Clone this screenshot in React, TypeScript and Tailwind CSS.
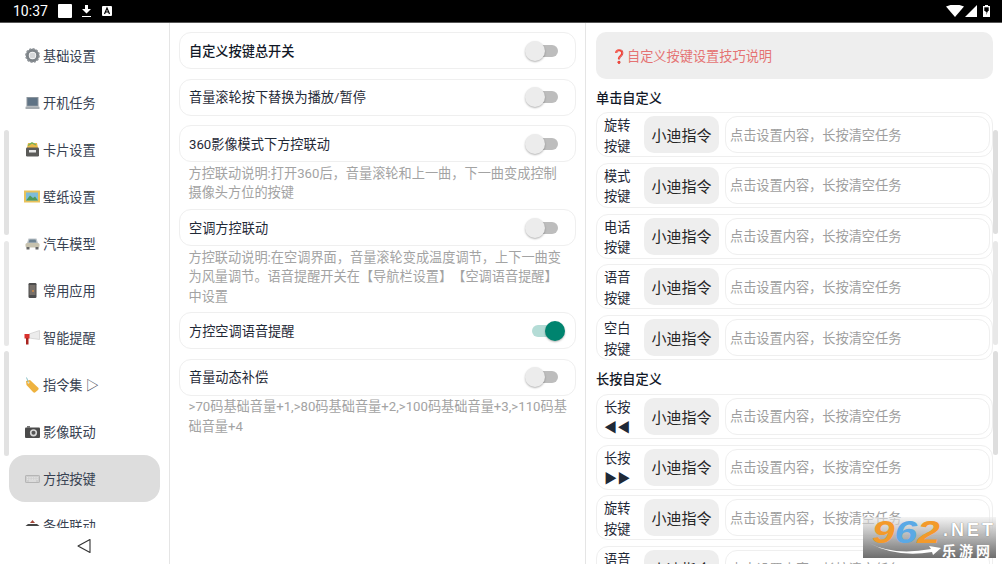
const font = { fontFamily: 'Roboto, "Noto Sans CJK SC", sans-serif' };

const Gear = () => (
  <svg width="15" height="15" viewBox="0 0 15 15">
    <circle cx="7.5" cy="7.5" r="5.2" fill="none" stroke="#7d8388" strokeWidth="3" />
    <circle cx="7.5" cy="7.5" r="6.6" fill="none" stroke="#8f9499" strokeWidth="1.6" strokeDasharray="2 1.45" />
    <circle cx="7.5" cy="7.5" r="3" fill="#d5d7d9" />
  </svg>
);
const Laptop = () => (
  <svg width="15" height="14" viewBox="0 0 15 14">
    <rect x="2" y="1.5" width="11" height="8.5" fill="#5f7385" stroke="#8b949c" />
    <rect x="0.5" y="10.5" width="14" height="2.5" rx="0.6" fill="#a5abb0" />
  </svg>
);
const CardBox = () => (
  <svg width="15" height="15" viewBox="0 0 15 15">
    <path d="M2 6 L3 1 H12 L13 6Z" fill="#e9b949" />
    <path d="M3 3.5 L7 0.8 L11 3" stroke="#79b05b" strokeWidth="1.4" fill="none" />
    <rect x="1" y="5.5" width="13" height="9" rx="1.2" fill="#5a5a58" />
    <rect x="4" y="8" width="7" height="2.5" fill="#e8e8e8" />
  </svg>
);
const Picture = () => (
  <svg width="16" height="13" viewBox="0 0 16 13">
    <rect x="0" y="0.5" width="16" height="12" fill="#e9c25a" />
    <rect x="2" y="2.5" width="12" height="8" fill="#7dbcd9" />
    <path d="M2 10.5 L6 5.5 L9 8 L11 6.5 L14 10.5Z" fill="#4e9a5a" />
  </svg>
);
const Car = () => (
  <svg width="15" height="13" viewBox="0 0 15 13">
    <path d="M3.5 1.5 H11.5 L13 6 H2Z" fill="#bfc5c9" />
    <path d="M4.5 2.5 H10.5 L11.5 5.5 H3.5Z" fill="#6f8492" />
    <rect x="0.5" y="6" width="14" height="4.5" rx="1.5" fill="#c7c2ae" />
    <rect x="1.5" y="10" width="3" height="2.5" fill="#666" />
    <rect x="10.5" y="10" width="3" height="2.5" fill="#666" />
  </svg>
);
const Phone = () => (
  <svg width="9" height="15" viewBox="0 0 9 15">
    <rect x="0.5" y="0" width="8" height="15" rx="1.2" fill="#4d4d4d" />
    <rect x="1.5" y="2" width="6" height="10" fill="#77706a" />
    <circle cx="5" cy="8" r="1" fill="#d08a45" />
  </svg>
);
const Megaphone = () => (
  <svg width="16" height="15" viewBox="0 0 16 15">
    <path d="M15.5 0.5 V9.5 L5 8 V4Z" fill="#ececec" stroke="#bcbcbc" strokeWidth="0.5" />
    <rect x="0.5" y="4" width="5" height="4.5" fill="#d9302c" />
    <rect x="2" y="8" width="2.5" height="6.5" fill="#a8241f" />
  </svg>
);
const Tag = () => (
  <svg width="14" height="16" viewBox="0 0 14 16">
    <path d="M1 4 L5 3 L13.5 11 Q14 12 13 13 L10 15.5 Q9 16 8 15 L1.5 8Z" fill="#eeb23f" />
    <circle cx="3.5" cy="5.5" r="0.9" fill="#fff" />
    <path d="M3.5 5.5 L1.5 0.5" stroke="#6bb0b8" strokeWidth="0.8" />
  </svg>
);
const Camera = () => (
  <svg width="15" height="12" viewBox="0 0 15 12">
    <rect x="0" y="1.5" width="15" height="10.5" rx="1" fill="#4a4a4a" />
    <rect x="2" y="0" width="3" height="2" fill="#777" />
    <circle cx="8.5" cy="6.8" r="3.6" fill="#d6d6d6" />
    <circle cx="8.5" cy="6.8" r="2" fill="#555" />
  </svg>
);
const Keyboard = () => (
  <svg width="15" height="8" viewBox="0 0 15 8">
    <rect x="0.5" y="0.5" width="14" height="7" rx="0.6" fill="#cfcfcf" stroke="#b5b5b5" />
    <path d="M2 2.7 H13 M2 4.3 H13" stroke="#eeeeee" strokeWidth="0.8" strokeDasharray="1 0.7" />
    <path d="M4 6 H11" stroke="#eeeeee" strokeWidth="0.8" />
  </svg>
);
const Hat = () => (
  <svg width="15" height="13" viewBox="0 0 15 13">
    <path d="M5 4 L7.5 1 L10 4Z" fill="#a5483a" />
    <path d="M3 5 H12 L14.5 7 H0.5Z" fill="#454545" />
  </svg>
);

const navItems: [React.ReactNode, string][] = [
  [<Gear />, '基础设置'],
  [<Laptop />, '开机任务'],
  [<CardBox />, '卡片设置'],
  [<Picture />, '壁纸设置'],
  [<Car />, '汽车模型'],
  [<Phone />, '常用应用'],
  [<Megaphone />, '智能提醒'],
  [<Tag />, '指令集 ▷'],
  [<Camera />, '影像联动'],
  [<Keyboard />, '方控按键'],
  [<Hat />, '条件联动'],
];

function Switch({ on }: { on?: boolean }) {
  return on ? (
    <div className="relative -mr-[7px] h-5 w-[33px] shrink-0">
      <div className="absolute left-0 right-1 top-1 h-3 rounded-full bg-[#b4dcd6]" />
      <div className="absolute right-0 top-0 h-5 w-5 rounded-full bg-[#00846f] shadow-[0_1px_2px_rgba(0,0,0,0.3)]" />
    </div>
  ) : (
    <div className="relative h-5 w-[33px] shrink-0">
      <div className="absolute left-1 right-0 top-1 h-3 rounded-full bg-[#bdbdbd]" />
      <div className="absolute left-0 top-0 h-5 w-5 rounded-full bg-[#ececec] shadow-[0_1px_2px_rgba(0,0,0,0.3)]" />
    </div>
  );
}

function Setting({ title, on, strong, desc, className }: { title: string; on?: boolean; strong?: boolean; desc?: string[]; className?: string }) {
  return (
    <div className={className}>
      <div className="flex h-[37px] items-center justify-between rounded-[12px] border border-[#efefef] pl-[9px] pr-[17px]">
        <span className={`pt-[2px] text-[13.2px] ${strong ? 'font-medium text-[#111827]' : 'text-[#1f2937]'}`}>{title}</span>
        <Switch on={on} />
      </div>
      {desc && (
        <div className="mt-[1.5px] pl-[9.5px] text-[13.2px] leading-[19.5px] text-[#a3a3a3] [text-spacing-trim:space-all]">
          {desc.map((l) => (
            <div key={l} className="whitespace-nowrap">{l}</div>
          ))}
        </div>
      )}
    </div>
  );
}

function KeyRow({ a, b }: { a: string; b: string }) {
  return (
    <div className="mb-[5.75px] flex h-[45px] shrink-0 items-center rounded-[12px] border border-[#efefef] pl-[7px] pr-[2px]">
      <div className="w-[40px] shrink-0 pt-[4px] text-[13.2px] leading-[20.5px] text-[#1f2937]">
        <div>{a}</div>
        <div>{b}</div>
      </div>
      <div className="flex h-[37px] w-[75px] shrink-0 items-center justify-center rounded-[10px] bg-[#eeeeee] pt-[3px] text-[15px] text-[#262626]">小迪指令</div>
      <div className="ml-[6px] flex h-[37px] flex-1 items-center rounded-[12px] border border-[#efefef] pl-[4px] pt-[2px] text-[13.2px] text-[#9e9e9e]">
        点击设置内容，长按清空任务
      </div>
    </div>
  );
}

export default function App() {
  return (
    <div style={font} className="relative flex h-[564px] w-[1002px] flex-col overflow-hidden bg-white">
      {/* status bar */}
      <div className="flex h-[23px] shrink-0 items-center border-b border-[#555] bg-black pl-[13px] pr-[12px] text-white">
        <span className="text-[14px] leading-none">10:37</span>
        <div className="ml-[10px] h-[14px] w-[14px] rounded-[1px] bg-white" />
        <svg className="ml-[9px]" width="11" height="14" viewBox="0 0 11 14">
          <path d="M4 1 H7 V5 H10 L5.5 9.5 L1 5 H4Z M1 12 H10 V13 H1Z" fill="#fff" />
        </svg>
        <svg className="ml-[10px]" width="10" height="10" viewBox="0 0 10 10">
          <rect width="10" height="10" rx="1" fill="#fff" />
          <path d="M2.5 8 L5 2 L7.5 8 M3.5 6 H6.5" stroke="#000" strokeWidth="1.2" fill="none" />
        </svg>
        <div className="flex-1" />
        <svg width="18" height="12" viewBox="0 0 18 12"><path d="M0 1.5 Q9 -2.5 18 1.5 L9 12Z" fill="#fff" /></svg>
        <svg className="ml-[1px]" width="12" height="12" viewBox="0 0 12 12"><path d="M0 12 L12 0 V12Z" fill="#fff" /></svg>
        <svg className="ml-[6px]" width="7" height="12" viewBox="0 0 7 12">
          <path d="M2 0 H5 V1 H7 V12 H0 V1 H2Z" fill="#fff" />
          <path d="M1.3 2.3 H5.7 V6 H1.3Z" fill="#000" />
          <path d="M4 3 L2.3 7 H3.6 L3 10 L5 6 H3.7Z" fill="#000" />
        </svg>
      </div>

      <div className="flex min-h-0 flex-1">
        {/* left nav */}
        <div className="flex w-[170px] shrink-0 flex-col border-r border-[#e5e5e5]">
          <div className="min-h-0 flex-1 overflow-hidden px-[9px] pt-[9px]">
            {navItems.map(([icon, label], i) => (
              <div key={label} className={`flex h-[47px] items-center rounded-[16px] pl-[15px] text-[13.2px] text-[#374151] ${i === 9 ? 'bg-[#dddddd]' : ''}`}>
                <span className="flex w-[19px] shrink-0 justify-center pr-[3px]">{icon}</span>
                <span className="whitespace-nowrap pt-[3px]">{label}</span>
              </div>
            ))}
          </div>
          <div className="flex h-[36px] shrink-0 items-center justify-center pr-[2px]">
            <svg width="16" height="16" viewBox="0 0 16 16">
              <path d="M14 1.5 V14.5 L2 8Z" fill="none" stroke="#333" strokeWidth="1.1" strokeLinejoin="round" />
            </svg>
          </div>
        </div>

        {/* middle */}
        <div className="flex w-[416px] shrink-0 flex-col gap-[9.5px] border-r border-[#e5e5e5] px-[9px] pt-[9px]">
          <Setting title="自定义按键总开关" strong />
          <Setting title="音量滚轮按下替换为播放/暂停" />
          <Setting
            title="360影像模式下方控联动"
            desc={['方控联动说明:打开360后，音量滚轮和上一曲，下一曲变成控制', '摄像头方位的按键']}
            className="-mb-[3px]"
          />
          <Setting
            title="空调方控联动"
            desc={['方控联动说明:在空调界面，音量滚轮变成温度调节，上下一曲变', '为风量调节。语音提醒开关在【导航栏设置】【空调语音提醒】', '中设置']}
            className="-mb-[3.5px]"
          />
          <Setting title="方控空调语音提醒" on />
          <Setting
            title="音量动态补偿"
            desc={['>70码基础音量+1,>80码基础音量+2,>100码基础音量+3,>110码基', '础音量+4']}
          />
        </div>

        {/* right */}
        <div className="min-w-0 flex-1 overflow-hidden pl-[10px] pr-[9px] pt-[9px]">
          <div className="flex h-[47px] items-center rounded-[10px] bg-[#eeeeee] pl-[15px] pt-[2px] text-[13.2px] text-[#e57373]">
            <span className="text-[#e53935]">❓</span>自定义按键设置技巧说明
          </div>
          <div className="flex h-[33px] items-center pt-[6px] text-[13.2px] font-medium text-[#111827]">单击自定义</div>
          <KeyRow a="旋转" b="按键" />
          <KeyRow a="模式" b="按键" />
          <KeyRow a="电话" b="按键" />
          <KeyRow a="语音" b="按键" />
          <KeyRow a="空白" b="按键" />
          <div className="-mt-[5px] flex h-[33px] items-center pt-[6px] text-[13.2px] font-medium text-[#111827]">长按自定义</div>
          <KeyRow a="长按" b="◀◀" />
          <KeyRow a="长按" b="▶▶" />
          <KeyRow a="旋转" b="按键" />
          <KeyRow a="语音" b="按键" />
        </div>
      </div>

      {/* overlay scrollbars */}
      <div className="absolute left-[4px] top-[130px] h-[105px] w-[5px] rounded-full bg-[#e2e2e2]" />
      <div className="absolute left-[4px] top-[241px] h-[105px] w-[5px] rounded-full bg-[#e8e8e8]" />
      <div className="absolute left-[4px] top-[351px] h-[105px] w-[5px] rounded-full bg-[#e2e2e2]" />
      <div className="absolute left-[993px] top-[130px] h-[104px] w-[5px] rounded-full bg-[#dedede]" />
      <div className="absolute left-[993px] top-[241px] h-[104px] w-[5px] rounded-full bg-[#e8e8e8]" />
      <div className="absolute left-[993px] top-[351px] h-[104px] w-[5px] rounded-full bg-[#dedede]" />

      {/* watermark */}
      <div className="absolute left-[863px] top-[517px] h-[41px] w-[133px] overflow-hidden bg-linear-to-b from-[rgba(235,235,235,0.55)] via-[rgba(170,170,170,0.9)] to-[#6e6e6e]">
        <div style={{ fontFamily: '"Liberation Sans", sans-serif' }} className="absolute left-[9px] top-[-3px] origin-left scale-x-[1.27] whitespace-nowrap text-[32px] font-bold italic leading-[36px]">
          <span className="text-[#f39a2b]">9</span>
          <span className="text-[#5aa9e6]">6</span>
          <span className="text-[#f39a2b]">2</span>
        </div>
        <div style={{ fontFamily: '"Liberation Sans", sans-serif' }} className="absolute left-[80px] top-[3px] whitespace-nowrap text-[18px] font-bold leading-[20px] tracking-[3px] text-white [text-shadow:0_0_1px_#555]">.NET</div>
        <div className="absolute left-[79px] top-[25px] whitespace-nowrap text-[14px] font-bold leading-[18px] tracking-[3px] text-white">乐游网</div>
        <svg className="absolute left-[6px] top-[26px]" width="72" height="14" viewBox="0 0 72 14">
          <path d="M0 0 Q25 13 62 6 L60 3 L72 5 L64 12 L63 9 Q28 15 0 0Z" fill="#fff" />
        </svg>
      </div>
    </div>
  );
}
